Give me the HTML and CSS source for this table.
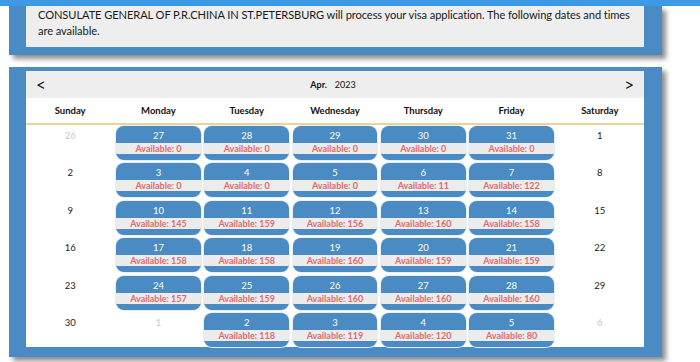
FILE: index.html
```html
<!DOCTYPE html>
<html>
<head>
<meta charset="utf-8">
<link rel="stylesheet" href="styles.css">
</head>
<body>
<div class="topbar"></div>
<div class="panel notice-panel">
  <div class="notice">CONSULATE GENERAL OF P.R.CHINA IN ST.PETERSBURG will process your visa application. The following dates and times are available.</div>
</div>
<div class="panel cal-panel">
  <div class="calendar">
    <div class="cal-head">
      <span class="nav prev">&lt;</span>
      <span class="month"><b>Apr.</b><span class="year">2023</span></span>
      <span class="nav next">&gt;</span>
    </div>
    <div class="days">
      <div>Sunday</div><div>Monday</div><div>Tuesday</div><div>Wednesday</div><div>Thursday</div><div>Friday</div><div>Saturday</div>
    </div>
    <div class="grid">
      <div class="day out">26</div>
      <div class="slot"><div class="num">27</div><div class="avail">Available: 0</div></div>
      <div class="slot"><div class="num">28</div><div class="avail">Available: 0</div></div>
      <div class="slot"><div class="num">29</div><div class="avail">Available: 0</div></div>
      <div class="slot"><div class="num">30</div><div class="avail">Available: 0</div></div>
      <div class="slot"><div class="num">31</div><div class="avail">Available: 0</div></div>
      <div class="day">1</div>

      <div class="day">2</div>
      <div class="slot"><div class="num">3</div><div class="avail">Available: 0</div></div>
      <div class="slot"><div class="num">4</div><div class="avail">Available: 0</div></div>
      <div class="slot"><div class="num">5</div><div class="avail">Available: 0</div></div>
      <div class="slot"><div class="num">6</div><div class="avail">Available: 11</div></div>
      <div class="slot"><div class="num">7</div><div class="avail">Available: 122</div></div>
      <div class="day">8</div>

      <div class="day">9</div>
      <div class="slot"><div class="num">10</div><div class="avail">Available: 145</div></div>
      <div class="slot"><div class="num">11</div><div class="avail">Available: 159</div></div>
      <div class="slot"><div class="num">12</div><div class="avail">Available: 156</div></div>
      <div class="slot"><div class="num">13</div><div class="avail">Available: 160</div></div>
      <div class="slot"><div class="num">14</div><div class="avail">Available: 158</div></div>
      <div class="day">15</div>

      <div class="day">16</div>
      <div class="slot"><div class="num">17</div><div class="avail">Available: 158</div></div>
      <div class="slot"><div class="num">18</div><div class="avail">Available: 158</div></div>
      <div class="slot"><div class="num">19</div><div class="avail">Available: 160</div></div>
      <div class="slot"><div class="num">20</div><div class="avail">Available: 159</div></div>
      <div class="slot"><div class="num">21</div><div class="avail">Available: 159</div></div>
      <div class="day">22</div>

      <div class="day">23</div>
      <div class="slot"><div class="num">24</div><div class="avail">Available: 157</div></div>
      <div class="slot"><div class="num">25</div><div class="avail">Available: 159</div></div>
      <div class="slot"><div class="num">26</div><div class="avail">Available: 160</div></div>
      <div class="slot"><div class="num">27</div><div class="avail">Available: 160</div></div>
      <div class="slot"><div class="num">28</div><div class="avail">Available: 160</div></div>
      <div class="day">29</div>

      <div class="day">30</div>
      <div class="day out">1</div>
      <div class="slot"><div class="num">2</div><div class="avail">Available: 118</div></div>
      <div class="slot"><div class="num">3</div><div class="avail">Available: 119</div></div>
      <div class="slot"><div class="num">4</div><div class="avail">Available: 120</div></div>
      <div class="slot"><div class="num">5</div><div class="avail">Available: 80</div></div>
      <div class="day out">6</div>
    </div>
  </div>
</div>
</body>
</html>
```
FILE: styles.css
```css
* { box-sizing: border-box; }
html, body { margin: 0; padding: 0; background: #fff; }
body {
  font-family: Lato, "Open Sans", sans-serif;
  color: #222;
  width: 700px;
  height: 362px;
  overflow: hidden;
}
.topbar {
  height: 6px;
  background: #3d9ae6;
}
.panel {
  margin-left: 9px;
  width: 653px;
  background: #4a8bc3;
  box-shadow: 4px 4px 5px rgba(0, 0, 0, 0.45);
}
.notice-panel {
  padding: 0 18px 8px 17px;
}
.notice {
  background: #eeeeee;
  padding: 1px 8px 8px 12px;
  font-size: 11.1px;
  letter-spacing: -0.08px;
  line-height: 16px;
  color: #1a1a1a;
}
.cal-panel {
  margin-top: 12px;
  padding: 4px 18px 10px 17px;
}
.calendar {
  background: #fff;
}
.cal-head {
  height: 27px;
  background: #eeeeee;
  display: grid;
  grid-template-columns: 1fr auto 1fr;
  align-items: center;
  padding: 0 10px 0 10px;
}
.nav {
  font-size: 17px;
  line-height: 16px;
  color: #111;
}
.next {
  justify-self: end;
}
.month {
  font-size: 9px;
  color: #111;
  margin-right: 4px;
}
.year {
  margin-left: 8px;
}
.days {
  display: grid;
  grid-template-columns: repeat(7, 1fr);
  height: 27px;
  border-bottom: 2px solid #ead596;
  align-items: center;
  text-align: center;
  font-weight: 700;
  font-size: 9.5px;
  color: #111;
  padding-bottom: 1px;
}
.grid {
  display: grid;
  grid-template-columns: repeat(7, 1fr);
  grid-auto-rows: 34px;
  row-gap: 3.4px;
  padding-top: 1px;
}
.day {
  text-align: center;
  font-size: 9.5px;
  line-height: 14px;
  padding-top: 3px;
  color: #222;
}
.day.out {
  color: #c8c8c8;
}
.slot {
  margin: 0 1.7px;
  background: #4a8bc3;
  border-radius: 8px;
  overflow: hidden;
  text-align: center;
  box-shadow: 0 0 0 1px #e6eef6;
}
.num {
  height: 17px;
  padding-top: 3px;
  line-height: 14px;
  font-size: 9.5px;
  color: #fff;
}
.avail {
  height: 11px;
  line-height: 11px;
  background: #ececec;
  color: #e06a6a;
  font-weight: 700;
  font-size: 9px;
}
```
